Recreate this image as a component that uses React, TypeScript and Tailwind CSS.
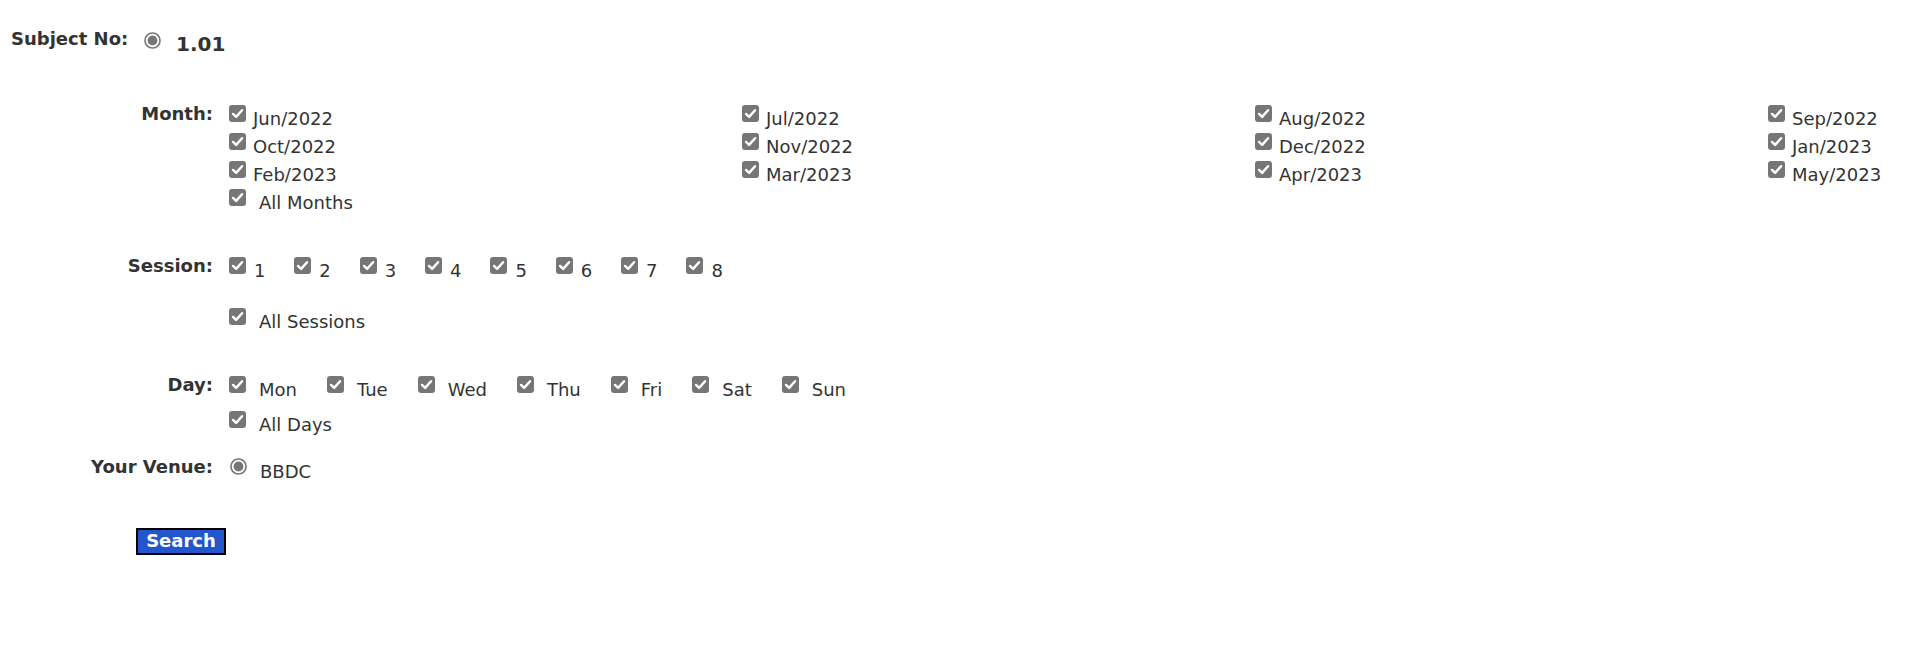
import type { ReactNode } from 'react';

const months = [
  'Jun/2022', 'Jul/2022', 'Aug/2022', 'Sep/2022',
  'Oct/2022', 'Nov/2022', 'Dec/2022', 'Jan/2023',
  'Feb/2023', 'Mar/2023', 'Apr/2023', 'May/2023',
];

const sessions = ['1', '2', '3', '4', '5', '6', '7', '8'];

const days = ['Mon', 'Tue', 'Wed', 'Thu', 'Fri', 'Sat', 'Sun'];

// Gray checked box, like Chrome's default checked checkbox
function CheckBox() {
  return (
    <span className="w-[17px] h-[17px] shrink-0 rounded-[3px] bg-[#767676] flex items-center justify-center">
      <svg width="17" height="17" viewBox="0 0 16 16" fill="none">
        <path d="M3.8 8.4 L6.7 11.2 L12.3 4.9" stroke="white" strokeWidth="2.3" strokeLinecap="round" strokeLinejoin="round" />
      </svg>
    </span>
  );
}

function Radio() {
  return (
    <svg width="17" height="17" viewBox="0 0 16 16" className="shrink-0">
      <circle cx="8" cy="8" r="7.1" fill="white" stroke="#767676" strokeWidth="1.5" />
      <circle cx="8" cy="8" r="4.6" fill="#767676" />
    </svg>
  );
}

function Item({ text, spaced }: { text: string; spaced?: boolean }) {
  return (
    <label className="flex items-start">
      <CheckBox />
      <span className={`${spaced ? 'ml-[13px]' : 'ml-[7px]'} mt-[4px] leading-[20px] whitespace-nowrap`}>{text}</span>
    </label>
  );
}

function Row({ label, children, className = '' }: { label: string; children: ReactNode; className?: string }) {
  return (
    <div className={`flex items-start ${className}`}>
      <div className="w-[213px] shrink-0 text-right font-bold leading-[16px] mt-[1px]">{label}</div>
      <div className="pl-[16px] flex flex-col">{children}</div>
    </div>
  );
}

export default function App() {
  return (
    <div className="min-h-[668px] bg-white text-[#333] text-[18px] font-['DejaVu_Sans',Verdana,sans-serif]">
      {/* Subject */}
      <div className="flex items-start pt-[31px] pl-[11px]">
        <div className="w-[133px] font-bold leading-[16px]">Subject No:</div>
        <span className="mt-[1px]"><Radio /></span>
        <span className="ml-[15px] mt-[1px] text-[20px] font-bold leading-[24px]">1.01</span>
      </div>

      <Row label="Month:" className="mt-[49px]">
        <div className="grid grid-cols-[513px_513px_513px_auto]">
          {months.map((m) => (
            <div key={m} className="h-[28px]">
              <Item text={m} />
            </div>
          ))}
        </div>
        <div className="h-[28px]">
          <Item text="All Months" spaced />
        </div>
      </Row>

      <Row label="Session:" className="mt-[40px]">
        <div className="h-[51px] flex gap-[28.9px]">
          {sessions.map((s) => (
            <label key={s} className="flex items-start">
              <CheckBox />
              <span className="ml-[8px] mt-[4px] leading-[20px]">{s}</span>
            </label>
          ))}
        </div>
        <div className="h-[28px]">
          <Item text="All Sessions" spaced />
        </div>
      </Row>

      <Row label="Day:" className="mt-[40px]">
        <div className="h-[35px] flex gap-[30px]">
          {days.map((d) => (
            <Item key={d} text={d} spaced />
          ))}
        </div>
        <div className="h-[28px]">
          <Item text="All Days" spaced />
        </div>
      </Row>

      <Row label="Your Venue:" className="mt-[19px]">
        <div className="h-[28px] flex items-start">
          <span className="ml-[1px]"><Radio /></span>
          <span className="ml-[13px] mt-[4px] leading-[20px]">BBDC</span>
        </div>
      </Row>

      <div className="pl-[136px] mt-[41px]">
        <button className="w-[90px] h-[27px] border-2 border-black bg-[#2356cc] text-white font-bold text-[18px] leading-[20px]">
          Search
        </button>
      </div>
    </div>
  );
}
